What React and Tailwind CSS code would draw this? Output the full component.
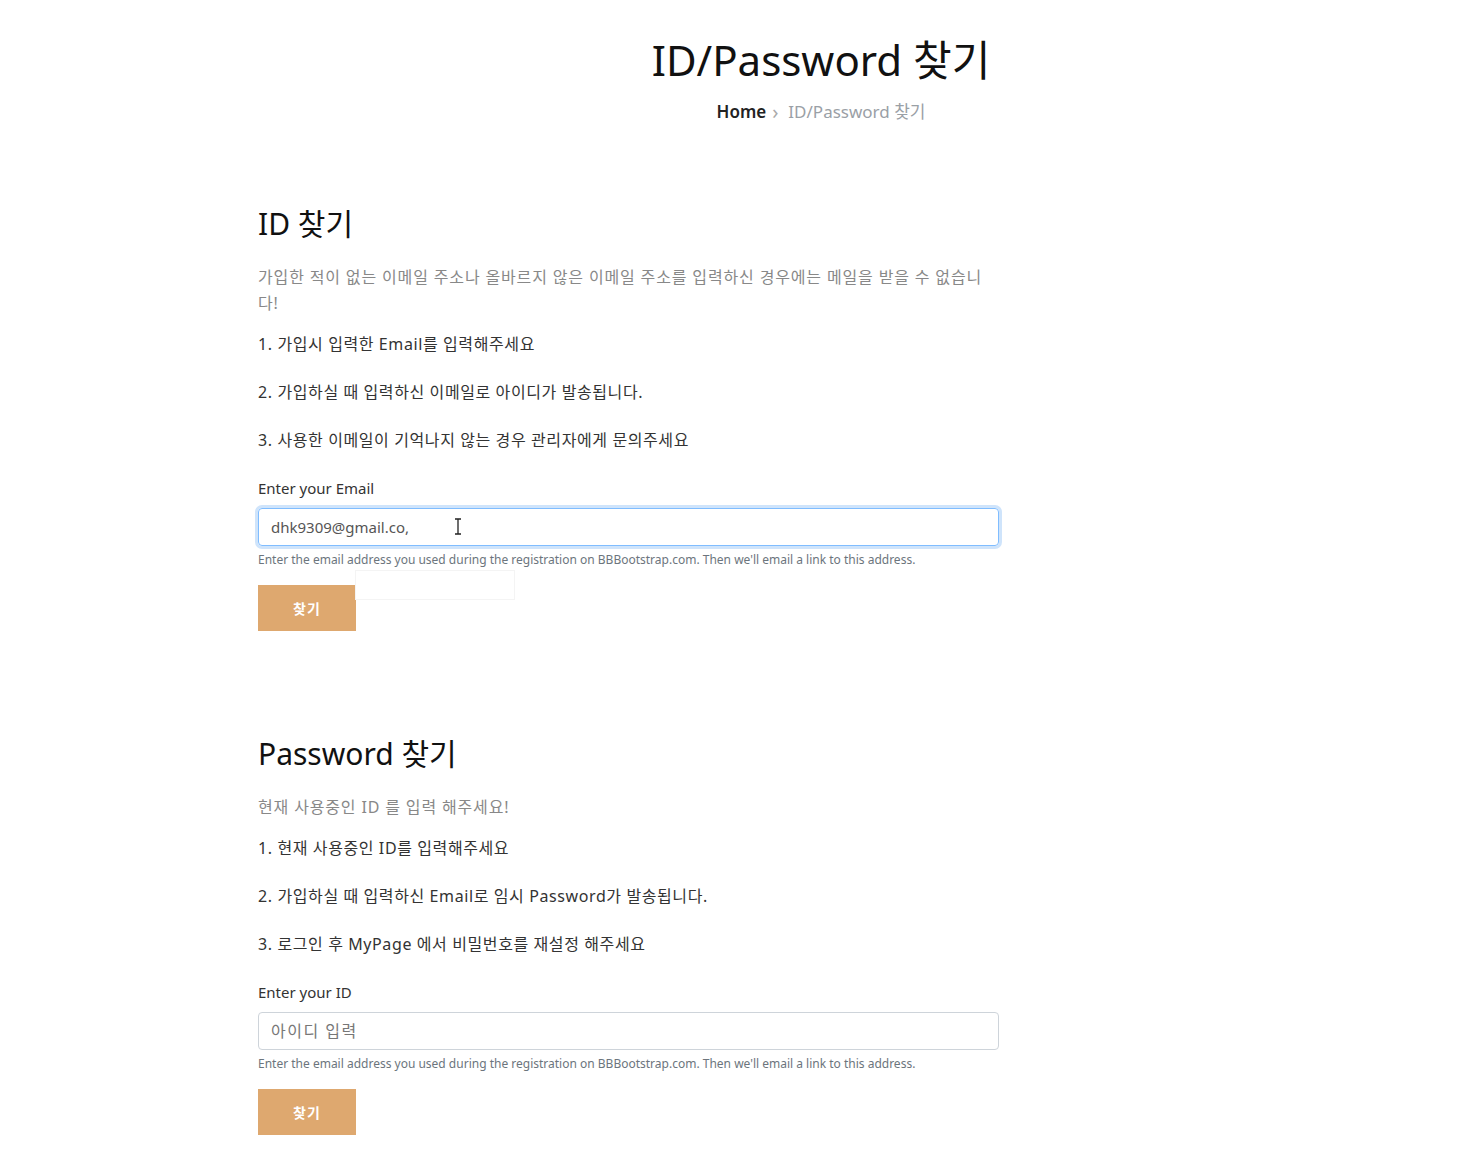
import React from 'react';

const font = { fontFamily: '"Noto Sans", "Noto Sans CJK KR", sans-serif' };

const FindSection = ({ title, desc, items, label, value, placeholder, focused }) => (
  <section className="w-[741px]">
    <h2 className="text-[30px] leading-[40px] text-[#111] font-normal">{title}</h2>
    <p className="mt-[20px] text-[16px] leading-[26px] tracking-[0.85px] text-[#888]">{desc}</p>
    <ol className="mt-[16px]">
      {items.map((item, i) => (
        <li key={i} className="text-[16px] leading-[24px] tracking-[0.6px] text-[#333] mb-[24px]">
          {i + 1}. {item}
        </li>
      ))}
    </ol>
    <label className="block text-[15px] leading-[24px] text-[#333]">{label}</label>
    <div className="relative mt-[8px]">
      <input
        readOnly
        value={value}
        placeholder={placeholder}
        className={
          focused
            ? 'w-full h-[38px] px-[12px] text-[15px] text-[#555] border border-[#80bdff] rounded-[4px] outline-none ring-[3px] ring-[#cfe4fb]'
            : 'w-full h-[38px] px-[12px] text-[16px] tracking-[1.5px] text-[#555] placeholder-[#777] border border-[#ced4da] rounded-[4px] outline-none'
        }
      />
      {focused && (
        <svg className="absolute left-[196px] top-[10px]" width="8" height="17" viewBox="0 0 8 17">
          <path d="M1 1h6M4 1v15M1 16h6" stroke="#222" strokeWidth="1.3" fill="none" />
        </svg>
      )}
    </div>
    <p className="mt-[6px] text-[12px] leading-[16px] text-[#6c757d]">
      Enter the email address you used during the registration on BBBootstrap.com. Then we'll email a link to this address.
    </p>
    <div className="relative mt-[17px]">
      <button className="w-[98px] h-[46px] bg-[#dea86f] text-white text-[14px] font-bold tracking-[1px]">찾기</button>
      {focused && (
        <div className="absolute left-[97px] -top-[15px] w-[160px] h-[30px] border border-[#f4f4f4] bg-white/60"></div>
      )}
    </div>
  </section>
);

const App = () => {
  return (
    <div className="min-h-screen bg-white" style={font}>
      <div className="ml-[258px] w-[1126px] pt-[30px] text-center">
        <h1 className="text-[42px] leading-[60px] text-[#111] font-normal">ID/Password 찾기</h1>
        <div className="mt-[10px] flex justify-center items-center text-[17px] leading-[24px]">
          <span className="text-[#222] font-semibold">Home</span>
          <span className="ml-[6px] mr-[10px] text-[#aaa] text-[20px] leading-[24px]">›</span>
          <span className="text-[#9aa0a6]">ID/Password 찾기</span>
        </div>
      </div>

      <div className="ml-[258px] mt-[80px]">
        <FindSection
          title="ID 찾기"
          desc="가입한 적이 없는 이메일 주소나 올바르지 않은 이메일 주소를 입력하신 경우에는 메일을 받을 수 없습니다!"
          items={[
            '가입시 입력한 Email를 입력해주세요',
            '가입하실 때 입력하신 이메일로 아이디가 발송됩니다.',
            '사용한 이메일이 기억나지 않는 경우 관리자에게 문의주세요',
          ]}
          label="Enter your Email"
          value="dhk9309@gmail.co,"
          focused
        />
      </div>

      <div className="ml-[258px] mt-[103px] pb-[25px]">
        <FindSection
          title="Password 찾기"
          desc="현재 사용중인 ID 를 입력 해주세요!"
          items={[
            '현재 사용중인 ID를 입력해주세요',
            '가입하실 때 입력하신 Email로 임시 Password가 발송됩니다.',
            '로그인 후 MyPage 에서 비밀번호를 재설정 해주세요',
          ]}
          label="Enter your ID"
          value=""
          placeholder="아이디 입력"
        />
      </div>
    </div>
  );
};

export default App;
